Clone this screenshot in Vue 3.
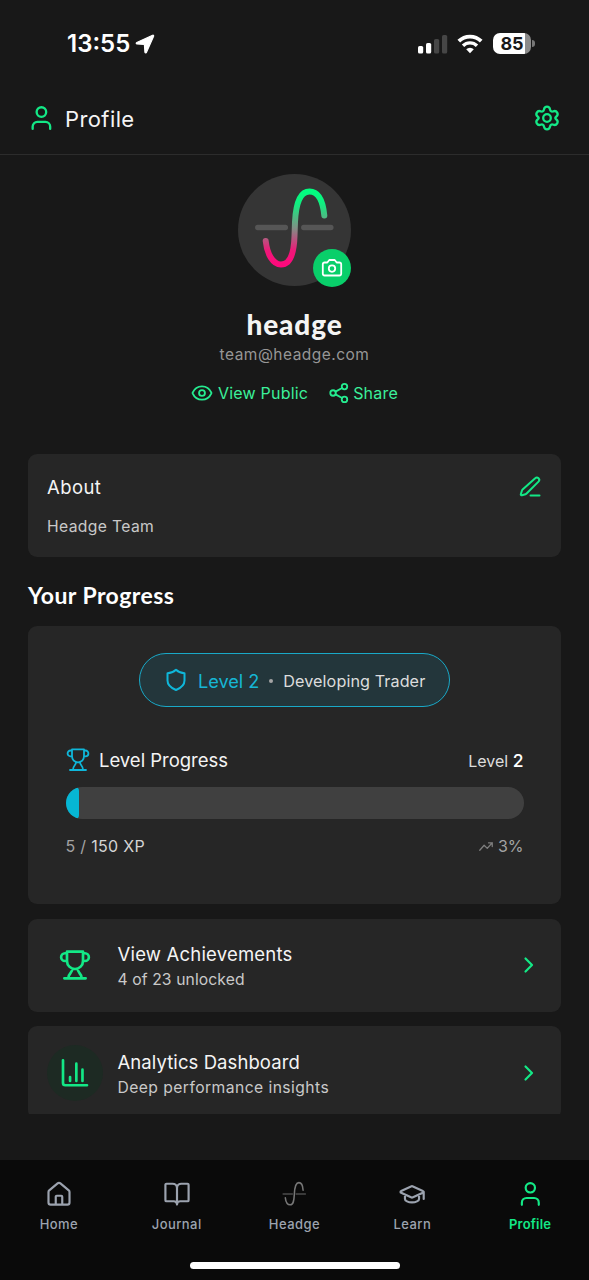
<script setup>
const tabs = [
  { id: 'home', label: 'Home' },
  { id: 'journal', label: 'Journal' },
  { id: 'headge', label: 'Headge' },
  { id: 'learn', label: 'Learn' },
  { id: 'profile', label: 'Profile', active: true },
]
const percent = 3
</script>

<template>
  <div class="screen">
    <div class="status">
      <span class="time">13:55</span>
      <svg class="loc" width="20" height="20" viewBox="0 0 20 20"><path d="M17.600 1.300 1.800 8.500c-.9.500-.7 1.500.2 1.500l7.400.5.500 7.500c0 1 1.200 1.200 1.600.2L18.600 2.300c.3-.8-.2-1.300-1-1z" fill="#fff" stroke="#fff" stroke-width="1.200" /></svg>
      <svg class="signal" width="30" height="20" viewBox="0 0 30 20">
        <rect x="0" y="12" width="5.200" height="7.500" rx="1.600" fill="#fff" />
        <rect x="8" y="9" width="5.200" height="10.500" rx="1.600" fill="#fff" />
        <rect x="16" y="5" width="5.200" height="14.500" rx="1.600" fill="#464646" />
        <rect x="24" y="1" width="5.200" height="18.500" rx="1.600" fill="#464646" />
      </svg>
      <svg class="wifi" width="26" height="20" viewBox="0 0 26 20">
        <path d="M1.800 7.200a16 16 0 0 1 22.400 0" stroke-width="3.800" />
        <path d="M6 11.700a10 10 0 0 1 14 0" stroke-width="3.400" />
        <path d="m13 19.200-3.800-3.900a5.400 5.400 0 0 1 7.600 0z" fill="#fff" stroke="none" />
      </svg>
      <div class="battery"><span>85</span></div>
      <i class="nub"></i>
    </div>

    <header class="header">
      <svg class="user" width="28" height="28" viewBox="0 0 24 24"><circle cx="11.500" cy="6.900" r="4.100" /><path d="M4 21.300v-2a4 4 0 0 1 4-4h7a4 4 0 0 1 4 4v2" /></svg>
      <h1>Profile</h1>
      <svg class="gear" width="28" height="28" viewBox="0 0 28 28">
        <path d="M14 2.700c1.700 0 2.700 1 3 2.700.3 1.900 1.600 2.600 3.300 1.900 1.600-.6 3-.2 3.900 1.300.8 1.500.5 2.900-.8 3.900-1.500 1.200-1.500 1.800 0 3 1.300 1 1.600 2.400.8 3.900-.9 1.500-2.300 1.900-3.900 1.300-1.700-.7-3 0-3.300 1.900-.3 1.700-1.300 2.700-3 2.700s-2.700-1-3-2.700c-.3-1.900-1.600-2.600-3.300-1.900-1.600.6-3 .2-3.900-1.300-.8-1.500-.5-2.900.8-3.900 1.500-1.200 1.500-1.800 0-3-1.300-1-1.600-2.400-.8-3.900.9-1.500 2.300-1.900 3.900-1.300 1.700.7 3 0 3.300-1.900.3-1.700 1.300-2.700 3-2.700z" />
        <circle cx="14" cy="14" r="3.800" />
      </svg>
    </header>

    <main class="content">
      <section class="hero">
        <div class="avatar">
          <svg width="113" height="112" viewBox="0 0 112 112">
            <defs>
              <linearGradient id="wave" x1="0" y1="16" x2="0" y2="92" gradientUnits="userSpaceOnUse">
                <stop offset="0" stop-color="#00ff80" /><stop offset=".18" stop-color="#10ee80" /><stop offset=".5" stop-color="#809085" /><stop offset=".8" stop-color="#ef1778" /><stop offset="1" stop-color="#ff087c" />
              </linearGradient>
            </defs>
            <path d="M19.300 53.500h27.500M65.300 53.500h27" stroke="#565656" stroke-width="5.500" />
            <path d="M27.200 67C28.500 80 34.500 90.500 42.500 90.500 52 90.500 55.500 79 56 62L56.500 48C57.500 28 62 17.500 71 17.500 80 17.500 84.500 28 85.800 41.500" stroke="url(#wave)" stroke-width="6" />
          </svg>
          <div class="camera">
            <svg width="22" height="20" viewBox="0 0 22 20"><path d="M8.300 2h5.400l2 2.500h2.800A1.700 1.700 0 0 1 20.200 6.200v9.600a1.700 1.700 0 0 1-1.700 1.700h-15a1.700 1.700 0 0 1-1.700-1.700V6.200a1.700 1.700 0 0 1 1.700-1.700h2.800z" /><circle cx="11" cy="10.600" r="3.200" /></svg>
          </div>
        </div>
        <h2>headge</h2>
        <p class="mail">team@headge.com</p>
        <div class="links">
          <svg width="22" height="22" viewBox="0 0 24 24"><path d="M1.800 12.400a1.300 1.300 0 0 1 0-.8C3.700 7.300 7.600 4.700 12 4.700s8.300 2.600 10.200 6.900a1.300 1.300 0 0 1 0 .8c-1.900 4.300-5.800 6.900-10.200 6.900S3.700 16.700 1.800 12.400z" /><circle cx="12" cy="12" r="3.200" /></svg>
          <span class="public">View Public</span>
          <svg class="share-ico" width="22" height="22" viewBox="0 0 24 24"><circle cx="18" cy="5" r="3" /><circle cx="5.500" cy="12" r="3" /><circle cx="18" cy="19" r="3" /><path d="m8.200 13.500 7.200 4M15.400 6.500l-7.200 4" /></svg>
          <span class="share">Share</span>
        </div>
      </section>

      <section class="card about">
        <div class="row">
          <h3>About</h3>
          <svg width="24" height="24" viewBox="0 0 24 24"><path d="M12.500 20.500H21.500M17.200 3.300a2.300 2.300 0 0 1 3.300 3.300L8.600 18.500a2.500 2.500 0 0 1-1.100.7l-3.600 1.100a.9.900 0 0 1-1.100-1.100L3.900 15.700a2.500 2.500 0 0 1 .7-1.100z" /></svg>
        </div>
        <p>Headge Team</p>
      </section>

      <h2 class="heading">Your Progress</h2>

      <section class="card progress">
        <div class="pill">
          <svg width="24" height="24" viewBox="0 0 24 24"><path d="M20.500 12.500c0 5-3.500 7.500-8.500 9.500-5-2-8.500-4.500-8.500-9.500V5.200C7 5.200 9.700 3.800 12 1.700c2.300 2.100 5 3.500 8.500 3.500z" /></svg>
          <span class="lvl">Level 2</span><i class="dot"></i><span class="rank">Developing Trader</span>
        </div>
        <div class="row level">
          <svg class="trophy" width="24" height="24" viewBox="0 0 24 24"><path d="M6 8.300H4.500a2.900 2.900 0 0 1 0-5.800H6M18 8.300h1.500a2.900 2.900 0 0 0 0-5.800H18M4 22h16M10 14c0 4-3 3-3 7.800M14 14c0 4 3 3 3 7.800M18 1.300H6v7a6 6 0 0 0 12 0z" /></svg>
          <span class="lp">Level Progress</span>
          <span class="lv">Level <b>2</b></span>
        </div>
        <div class="track"><div class="fill" :style="{ width: percent + '%' }"></div></div>
        <div class="row xp">
          <span class="amount">5 / <b>150 XP</b></span>
          <span class="pct"><svg width="16" height="15" viewBox="0 0 24 24"><path d="m2 18 7-8 5 5L22 6M16 6h6v6" /></svg>{{ percent }}%</span>
        </div>
      </section>

      <section class="card item">
        <div class="disc plain">
          <svg width="32" height="32" viewBox="0 0 24 24"><path d="M6 9H4.500a2.900 2.900 0 0 1 0-5.800H6M18 9h1.500a2.900 2.900 0 0 0 0-5.800H18M4 22h16M10 14.700c0 4-3 3-3 7.300M14 14.700c0 4 3 3 3 7.300M18 2H6v7a6 6 0 0 0 12 0z" /></svg>
        </div>
        <div class="copy"><h3 class="t1">View Achievements</h3><p class="p1">4 of 23 unlocked</p></div>
        <svg class="chev" width="24" height="24" viewBox="0 0 24 24"><path d="m8.500 18.500 6.500-6.500L8.500 5.500" /></svg>
      </section>

      <section class="card item">
        <div class="disc">
          <svg width="32" height="32" viewBox="0 0 24 24"><path d="M3 2.500v17A1.700 1.700 0 0 0 4.700 21.200H21M8.300 15v3M13 5v13M17.600 9.500V18" /></svg>
        </div>
        <div class="copy"><h3 class="t2">Analytics Dashboard</h3><p class="p2">Deep performance insights</p></div>
        <svg class="chev" width="24" height="24" viewBox="0 0 24 24"><path d="m8.500 18.500 6.500-6.500L8.500 5.500" /></svg>
      </section>
    </main>

    <nav class="tabs">
      <div v-for="t in tabs" :key="t.id" class="tab" :class="[t.id, { active: t.active }]">
        <svg width="26" height="26" viewBox="0 0 24 24">
          <path v-if="t.id === 'home'" d="M9 21.800v-7.300a.9.9 0 0 1 .9-.9h4.200a.9.9 0 0 1 .9.900v7.300M2.300 10.200a2 2 0 0 1 .7-1.500l7.700-6.500a2 2 0 0 1 2.600 0L21 8.700a2 2 0 0 1 .7 1.500v9.600a2 2 0 0 1-2 2H4.300a2 2 0 0 1-2-2z" />
          <path v-else-if="t.id === 'journal'" d="M12 6.300v15.500M2.300 18.700a1 1 0 0 1-1-1V3.500a1 1 0 0 1 1-1H8a4 4 0 0 1 4 3.800 4 4 0 0 1 4-3.800h5.700a1 1 0 0 1 1 1v14.200a1 1 0 0 1-1 1h-6.700a3 3 0 0 0-3 3 3 3 0 0 0-3-3z" />
          <g v-else-if="t.id === 'headge'"><path class="bar" d="M2 12h8.500M14 12h8.500" /><path class="curve" d="M4 15.500c.4 3.500 2 6.500 4.500 6.500 3 0 3.500-4 3.800-9.500.2-6 1-11 4.200-11C19 1.500 20.200 5 20.400 8.500" /></g>
          <path v-else-if="t.id === 'learn'" d="M22 10.900a.9.9 0 0 0 0-1.700L12.900 5a2.200 2.200 0 0 0-1.800 0L2 9.200a.9.9 0 0 0 0 1.700l9.100 4.200a2.200 2.200 0 0 0 1.800 0zM22.800 10v6.500M5.500 12.600V16.500c0 1.800 2.900 3.300 6.500 3.300s6.500-1.500 6.500-3.300v-3.900" />
          <g v-else><circle cx="12.300" cy="6.300" r="4.300" /><path d="M4.500 22v-2a4.300 4.300 0 0 1 4.300-4.300h7a4.300 4.300 0 0 1 4.300 4.300v2" /></g>
        </svg>
        <span>{{ t.label }}</span>
      </div>
      <div class="grip"></div>
    </nav>
  </div>
</template>

<style>
body { background: #181818; }
</style>

<style scoped>
* { box-sizing: border-box; }
.screen { width: 589px; height: 1280px; background: #181818; color: #f4f4f4; font-family: Inter, "Liberation Sans", sans-serif; display: flex; flex-direction: column; overflow: hidden; white-space: nowrap; }
h1, h2, h3, p { margin: 0; font-weight: 400; }
b { font-weight: 400; }
svg { fill: none; stroke: #13e886; stroke-width: 2; stroke-linecap: round; stroke-linejoin: round; flex: none; display: block; }
.status { height: 82px; padding: 5px 54px 0 67px; display: flex; align-items: center; flex: none; }
.time { font-size: 24px; font-weight: 600; color: #fff; }
.loc { margin-left: 5px; }
.signal { margin-left: auto; stroke: none; }
.wifi { margin-left: 9px; stroke: #fff; stroke-linecap: butt; }
.battery { margin-left: 10px; width: 38px; height: 21px; border-radius: 7px; background: linear-gradient(90deg, #fff 84%, #8b8b8b 84%); color: #181818; font-weight: 700; font-size: 18px; line-height: 21px; text-align: center; }
.nub { width: 3px; height: 7px; margin-left: 1px; background: #777; border-radius: 0 3px 3px 0; }
.header { height: 73px; padding: 0 28px; border-bottom: 1px solid #2c2c2c; display: flex; align-items: center; flex: none; }
.header h1 { font-size: 22px; letter-spacing: 0.400px; line-height: 30px; margin: 2px 0 0 9px; }
.gear { margin-left: auto; stroke-width: 2.300; }
.content { height: 959px; padding: 0 28px; overflow: hidden; flex: none; }
.hero { height: 298px; padding-top: 19px; display: flex; flex-direction: column; align-items: center; }
.avatar { width: 113px; height: 112px; border-radius: 50%; background: #353535; position: relative; }
.camera { position: absolute; right: 0; bottom: -1px; width: 38px; height: 38px; border-radius: 50%; background: #09cf6a; display: flex; align-items: center; justify-content: center; }
.camera svg { stroke: #fff; stroke-width: 1.800; }
.hero h2 { font-family: Lato, sans-serif; font-weight: 900; font-size: 28px; letter-spacing: 0.900px; line-height: 34px; margin-top: 21px; }
.mail { font-size: 15.500px; letter-spacing: 0.480px; line-height: 22px; margin-top: 3px; color: #969696; }
.links { display: flex; align-items: center; margin-top: 15px; height: 24px; color: #3bf09a; font-size: 16px; letter-spacing: 0.200px; }
.links svg { stroke: #25ec90; }
.public { margin-left: 5px; }
.share-ico { margin-left: 20px; }
.share { margin-left: 3px; }
.card { background: #262626; border-radius: 9px; }
.row { display: flex; align-items: center; }
.about { height: 103px; margin-top: 1px; padding: 20px 19px 0; }
.about .row { justify-content: space-between; height: 26px; }
.about h3 { font-size: 18.500px; letter-spacing: 0.400px; }
.about p { margin-top: 16px; font-size: 15.700px; letter-spacing: 0.350px; line-height: 22px; color: #c9c9c9; }
.heading { font-family: Lato, sans-serif; font-weight: 700; font-size: 23px; letter-spacing: 0.450px; line-height: 30px; margin: 23px 0 16px; color: #fff; }
.progress { height: 278px; padding: 27px 37.500px 0; }
.pill { width: 311px; height: 54px; margin: 0 auto; border: 1.500px solid #19a9c8; border-radius: 28px; background: #23363b; display: flex; align-items: center; padding-left: 24px; }
.pill svg, .trophy { stroke: #0fb7da; }
.lvl { color: #16b6d5; font-size: 18.200px; letter-spacing: -0.050px; margin: 1px 0 0 10px; }
.dot { width: 4px; height: 4px; border-radius: 50%; background: #a5a5a5; margin: 1px 10px 0; }
.rank { font-size: 16.200px; letter-spacing: 0.080px; margin-top: 1px; color: #ddd; }
.level { height: 30px; margin-top: 38px; }
.trophy { stroke-width: 1.800; }
.lp { font-size: 18.500px; margin-left: 9.500px; letter-spacing: -0.020px; }
.lv { margin-left: auto; font-size: 16px; color: #ddd; }
.lv b { font-size: 17.500px; font-weight: 500; color: #fff; }
.track { height: 32px; margin-top: 12px; border-radius: 16px; overflow: hidden; background: #404040; }
.fill { height: 100%; background: #06b6d4; border-radius: 0 4px 4px 0; }
.xp { height: 24px; margin-top: 15px; justify-content: space-between; font-size: 16px; color: #a3a3a3; }
.amount { letter-spacing: 0.300px; }
.xp b { color: #d4d4d4; }
.pct { display: flex; align-items: center; gap: 4px; }
.pct svg { stroke: #7f7f7f; }
.item { height: 93px; margin-top: 14.500px; padding: 0 20px 0 19px; display: flex; align-items: center; }
.disc { width: 56px; height: 56px; border-radius: 50%; background: #1d2a23; display: flex; align-items: center; justify-content: center; }
.disc.plain { background: none; }
.copy { margin: 3px 0 0 14.500px; }
.copy h3 { font-size: 18.500px; letter-spacing: 0.200px; line-height: 26px; }
.copy h3.t2 { letter-spacing: 0.080px; }
.copy p { font-size: 15.700px; line-height: 25px; color: #c9c9c9; letter-spacing: 0.100px; }
.copy p.p2 { letter-spacing: 0.420px; }
.chev { margin-left: auto; stroke-width: 2.200; }
.tabs { height: 120px; margin-top: auto; background: #0a0a0a; display: grid; grid-template-columns: repeat(5, 1fr); padding-top: 21px; position: relative; }
.tab { display: flex; flex-direction: column; align-items: center; color: #9ca3af; font-size: 13px; font-weight: 500; letter-spacing: 0.450px; }
.tab svg { stroke: #9ca3af; }
.tab span { line-height: 18px; margin-top: 8px; }
.tab.active { color: #13e886; font-weight: 600; letter-spacing: 0.200px; }
.tab.active svg { stroke: #13e886; }
.headge .bar { stroke: #4b4b4b; stroke-width: 1.400; }
.headge .curve { stroke: #777; stroke-width: 1.400; }
.grip { position: absolute; left: 190px; bottom: 11px; width: 210px; height: 7px; border-radius: 4px; background: #fff; }
</style>
